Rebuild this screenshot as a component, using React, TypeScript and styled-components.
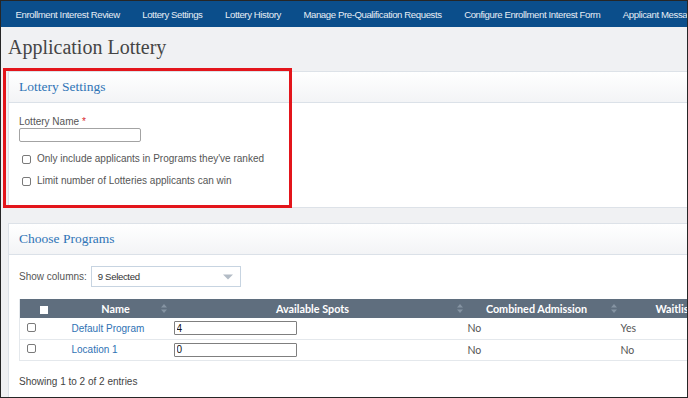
import React from "react";
import styled, { createGlobalStyle } from "styled-components";

const GlobalStyle = createGlobalStyle`
  html, body { margin: 0; padding: 0; background: #f0f1f3; }
  * { box-sizing: border-box; }
`;

const Frame = styled.div`
  position: relative;
  width: 688px;
  height: 398px;
  border: 1px solid #262626;
  overflow: hidden;
  background: #f0f1f3;
  font-family: "Liberation Sans", Arial, sans-serif;
`;

const Nav = styled.nav`
  display: flex;
  align-items: center;
  height: 26px;
  padding-left: 3px;
  background: #0b4e8b;
  white-space: nowrap;
`;

const NavItem = styled.a`
  flex: none;
  padding: 0 11px 0 11.5px;
  font-family: "Liberation Sans", Arial, sans-serif;
  font-size: 9.6px;
  letter-spacing: -0.4px;
  color: #e6edf5;
  text-decoration: none;
`;

const Main = styled.main`
  width: 780px;
  padding: 8px 0 0 7px;
`;

const Title = styled.h1`
  margin: 0 0 12px 0;
  font-family: "Liberation Serif", serif;
  font-weight: normal;
  font-size: 20px;
  line-height: 24px;
  color: #454545;
`;

const Panel = styled.section`
  background: #fff;
  border: 1px solid #dde2e8;
  margin-bottom: 15px;
`;

const PanelHeader = styled.header`
  height: 31px;
  padding-left: 10px;
  display: flex;
  align-items: center;
  background: linear-gradient(#ffffff, #f3f4f6);
  border-bottom: 1px solid #dbe1e8;
`;

const PanelTitle = styled.h2`
  margin: 0;
  font-family: "Liberation Serif", serif;
  font-weight: normal;
  font-size: 13.5px;
  color: #2f74b6;
`;

const PanelBody = styled.div<{ $pt: number; $pb: number }>`
  padding: ${(p) => p.$pt}px 10px ${(p) => p.$pb}px 10px;
`;

const FieldLabel = styled.label`
  display: block;
  font-size: 10px;
  line-height: 12px;
  color: #555;
`;

const Required = styled.span`
  color: #d9262c;
  margin-left: 3px;
`;

const TextInput = styled.input`
  display: block;
  width: 122px;
  height: 14px;
  margin: 0;
  border: 1px solid #a3a3a3;
  border-radius: 2px;
  background: #fff;
`;

const CheckRow = styled.label<{ $mt: number }>`
  display: flex;
  align-items: center;
  gap: 6px;
  margin-top: ${(p) => p.$mt}px;
  padding-left: 3px;
  font-size: 10px;
  line-height: 12px;
  color: #555;
`;

const Check = styled.input.attrs({ type: "checkbox" })`
  appearance: none;
  flex: none;
  width: 9px;
  height: 9px;
  margin: 0;
  border: 1px solid #7a7a7a;
  border-radius: 2px;
  background: #fff;
`;

const Toolbar = styled.div`
  display: flex;
  align-items: center;
  gap: 4px;
  font-size: 10px;
  color: #555;
`;

const SelectBox = styled.div`
  width: 150px;
  height: 21px;
  display: flex;
  align-items: center;
  justify-content: space-between;
  padding: 0 7px 0 6px;
  border: 1px solid #c7d4e1;
  background: #fff;
  font-family: "Liberation Sans", Arial, sans-serif;
  font-size: 9.6px;
  letter-spacing: -0.35px;
  color: #333;
`;

const Table = styled.table`
  margin-top: 12px;
  width: 720px;
  table-layout: fixed;
  border-collapse: collapse;
  border-left: 1px solid #e4e8ec;
`;

const Th = styled.th<{ $pl?: number; $pr?: number }>`
  position: relative;
  height: 19px;
  padding: 0 ${(p) => p.$pr ?? 12}px 0 ${(p) => p.$pl ?? 0}px;
  background: #5f6e7e;
  color: #fff;
  font-family: Lato, "Liberation Sans", sans-serif;
  font-weight: 700;
  font-size: 10.8px;
  text-align: center;
  white-space: nowrap;
`;

const SortIcon = styled.svg`
  position: absolute;
  right: 4px;
  top: 5px;
`;

const HeadCheck = styled.span`
  display: inline-block;
  width: 8px;
  height: 8px;
  background: #fff;
  vertical-align: middle;
`;

const Td = styled.td<{ $pl: number }>`
  height: 21px;
  padding: 0 0 0 ${(p) => p.$pl}px;
  border-bottom: 1px solid #e4e8ec;
  vertical-align: middle;
  font-size: 10px;
  color: #555;
  white-space: nowrap;
`;

const Plain = styled.span`
  font-family: Lato, "Liberation Sans", sans-serif;
  font-size: 10.5px;
  color: #555;
`;

const Link = styled.a`
  color: #2f72b4;
  text-decoration: none;
  font-size: 10px;
`;

const CellInput = styled.input`
  display: block;
  width: 123px;
  height: 14px;
  margin: 0;
  padding: 0 2px;
  border: 1px solid #7f7f7f;
  border-radius: 1px;
  font-family: "Liberation Sans", Arial, sans-serif;
  font-size: 10px;
  color: #111;
`;

const Footer = styled.div`
  margin-top: 15px;
  font-size: 10px;
  line-height: 12px;
  color: #444;
`;

const Annotation = styled.div`
  position: absolute;
  left: 2px;
  top: 67px;
  width: 289px;
  height: 140px;
  border: 3px solid #e3151b;
  pointer-events: none;
`;

const Sort = () => (
  <SortIcon width="6" height="9" viewBox="0 0 6 9">
    <path d="M3 0L6 3.6H0Z M3 9L0 5.4H6Z" fill="#8694a3" />
  </SortIcon>
);

const navItems = [
  "Enrollment Interest Review",
  "Lottery Settings",
  "Lottery History",
  "Manage Pre-Qualification Requests",
  "Configure Enrollment Interest Form",
  "Applicant Messages",
];

const rows = [
  { name: "Default Program", spots: "4", combined: "No", waitlist: "Yes" },
  { name: "Location 1", spots: "0", combined: "No", waitlist: "No" },
];

export default function App() {
  return (
    <>
      <GlobalStyle />
      <Frame>
        <Nav>
          {navItems.map((n) => (
            <NavItem key={n}>{n}</NavItem>
          ))}
        </Nav>
        <Main>
          <Title>Application Lottery</Title>
          <Panel>
            <PanelHeader>
              <PanelTitle>Lottery Settings</PanelTitle>
            </PanelHeader>
            <PanelBody $pt={13} $pb={20}>
              <FieldLabel>
                Lottery Name<Required>*</Required>
              </FieldLabel>
              <TextInput />
              <CheckRow $mt={11}>
                <Check />
                Only include applicants in Programs they've ranked
              </CheckRow>
              <CheckRow $mt={10}>
                <Check />
                Limit number of Lotteries applicants can win
              </CheckRow>
            </PanelBody>
          </Panel>
          <Panel>
            <PanelHeader>
              <PanelTitle>Choose Programs</PanelTitle>
            </PanelHeader>
            <PanelBody $pt={11} $pb={20}>
              <Toolbar>
                Show columns:
                <SelectBox>
                  9 Selected
                  <svg width="10" height="6" viewBox="0 0 10 6">
                    <path d="M0 0.5H10L5 5.5Z" fill="#b3bcc6" />
                  </svg>
                </SelectBox>
              </Toolbar>
              <Table>
                <colgroup>
                  <col style={{ width: 41 }} />
                  <col style={{ width: 110 }} />
                  <col style={{ width: 296 }} />
                  <col style={{ width: 154 }} />
                  <col style={{ width: 119 }} />
                </colgroup>
                <thead>
                  <tr>
                    <Th $pl={8} $pr={0}>
                      <HeadCheck />
                    </Th>
                    <Th $pr={0}>
                      Name
                      <Sort />
                    </Th>
                    <Th>
                      Available Spots
                      <Sort />
                    </Th>
                    <Th $pr={14}>
                      Combined Admission
                      <Sort />
                    </Th>
                    <Th>Waitlist</Th>
                  </tr>
                </thead>
                <tbody>
                  {rows.map((r) => (
                    <tr key={r.name}>
                      <Td $pl={7}>
                        <Check />
                      </Td>
                      <Td $pl={11}>
                        <Link>{r.name}</Link>
                      </Td>
                      <Td $pl={3}>
                        <CellInput defaultValue={r.spots} />
                      </Td>
                      <Td $pl={1}>
                        <Plain>{r.combined}</Plain>
                      </Td>
                      <Td $pl={0}>
                        <Plain>{r.waitlist}</Plain>
                      </Td>
                    </tr>
                  ))}
                </tbody>
              </Table>
              <Footer>Showing 1 to 2 of 2 entries</Footer>
            </PanelBody>
          </Panel>
        </Main>
        <Annotation />
      </Frame>
    </>
  );
}
